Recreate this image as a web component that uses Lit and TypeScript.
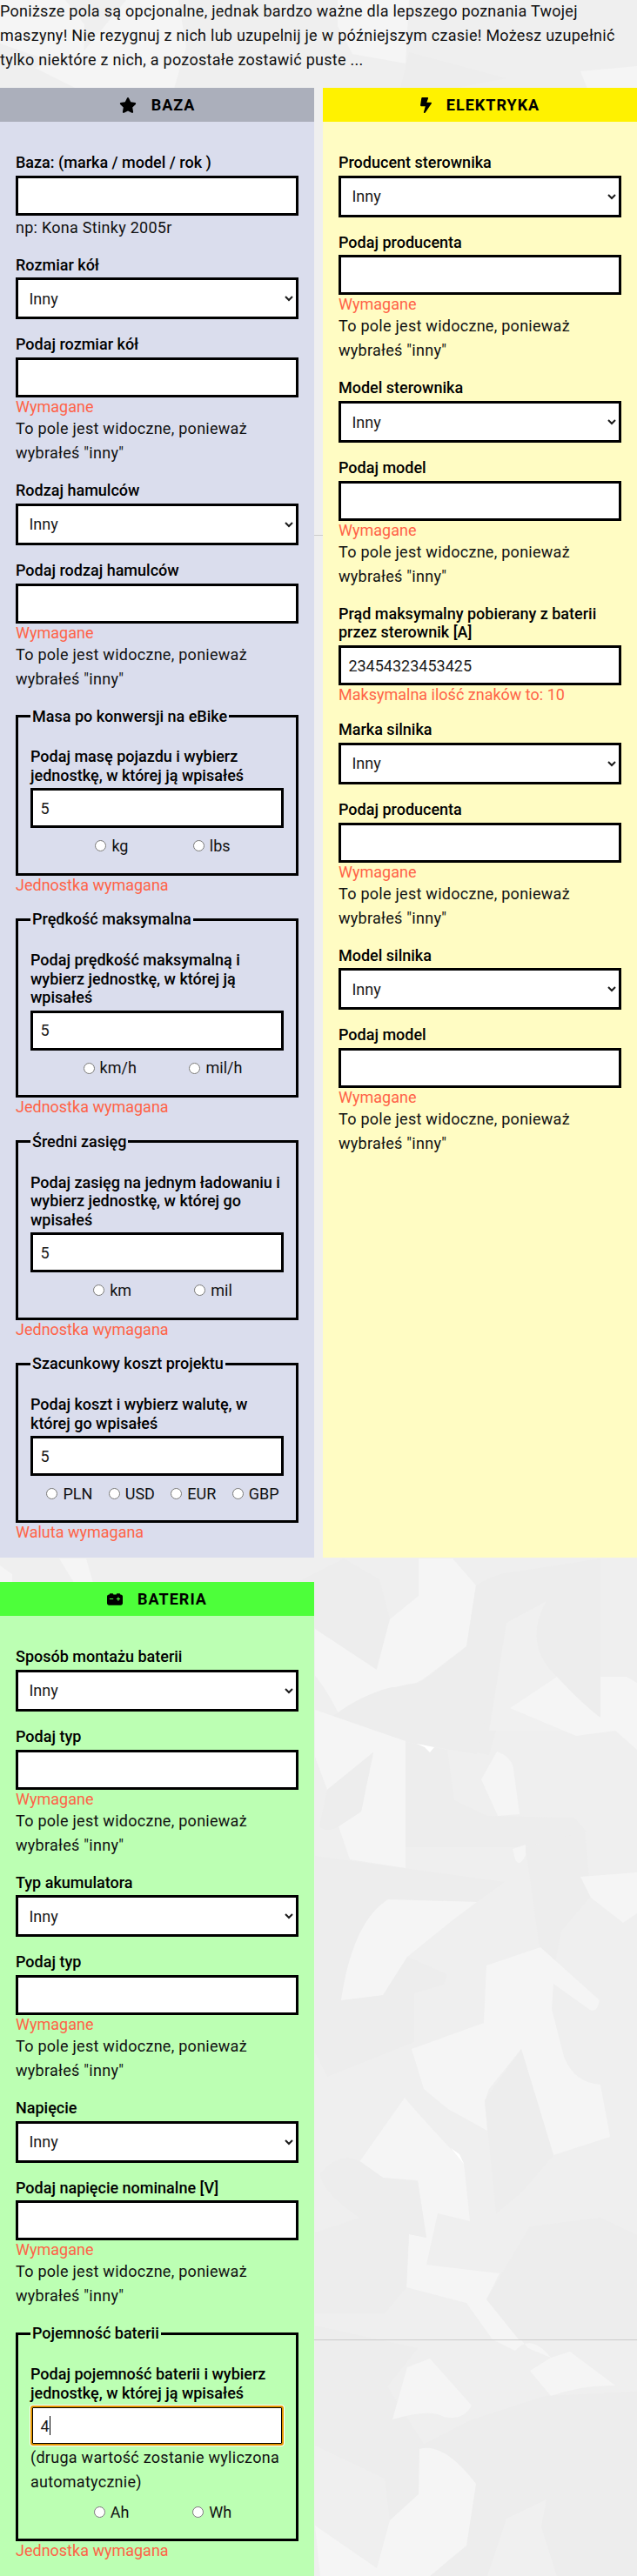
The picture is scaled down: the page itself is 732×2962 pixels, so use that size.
import { LitElement, html, css, svg, nothing } from 'lit';
import { customElement } from 'lit/decorators.js';

type Item =
  | { kind: 'select'; label: string }
  | { kind: 'input'; label: string; value?: string; hint?: string; error?: string; other?: boolean }
  | { kind: 'group'; legend: string; label: string; value: string; units: string[]; error: string; hint?: string; focused?: boolean };

const other = (label: string): Item => ({ kind: 'input', label, error: 'Wymagane', other: true });
const select = (label: string): Item => ({ kind: 'select', label });
const unitError = 'Jednostka wymagana';

const base: Item[] = [
  { kind: 'input', label: 'Baza: (marka / model / rok )', hint: 'np: Kona Stinky 2005r' },
  select('Rozmiar kół'),
  other('Podaj rozmiar kół'),
  select('Rodzaj hamulców'),
  other('Podaj rodzaj hamulców'),
  { kind: 'group', legend: 'Masa po konwersji na eBike', label: 'Podaj masę pojazdu i wybierz jednostkę, w której ją wpisałeś', value: '5', units: ['kg', 'lbs'], error: unitError },
  { kind: 'group', legend: 'Prędkość maksymalna', label: 'Podaj prędkość maksymalną i wybierz jednostkę, w której ją wpisałeś', value: '5', units: ['km/h', 'mil/h'], error: unitError },
  { kind: 'group', legend: 'Średni zasięg', label: 'Podaj zasięg na jednym ładowaniu i wybierz jednostkę, w której go wpisałeś', value: '5', units: ['km', 'mil'], error: unitError },
  { kind: 'group', legend: 'Szacunkowy koszt projektu', label: 'Podaj koszt i wybierz walutę, w której go wpisałeś', value: '5', units: ['PLN', 'USD', 'EUR', 'GBP'], error: 'Waluta wymagana' },
];
const electric: Item[] = [
  select('Producent sterownika'),
  other('Podaj producenta'),
  select('Model sterownika'),
  other('Podaj model'),
  { kind: 'input', label: 'Prąd maksymalny pobierany z baterii przez sterownik [A]', value: '23454323453425', error: 'Maksymalna ilość znaków to: 10' },
  select('Marka silnika'),
  other('Podaj producenta'),
  select('Model silnika'),
  other('Podaj model'),
];
const battery: Item[] = [
  select('Sposób montażu baterii'),
  other('Podaj typ'),
  select('Typ akumulatora'),
  other('Podaj typ'),
  select('Napięcie'),
  other('Podaj napięcie nominalne [V]'),
  { kind: 'group', legend: 'Pojemność baterii', label: 'Podaj pojemność baterii i wybierz jednostkę, w której ją wpisałeś', value: '4', units: ['Ah', 'Wh'], error: unitError, hint: '(druga wartość zostanie wyliczona automatycznie)', focused: true },
];

const star = html`<svg width="20" height="18" viewBox="0 0 576 512"><path d="M316.9 18C311.6 7 300.4 0 288.1 0s-23.4 7-28.800 18L195 150.300 51.400 171.500c-12 1.800-22 10.200-25.700 21.700s-.7 24.200 7.900 32.700L137.800 329 113.200 474.700c-2 12 3 24.200 12.900 31.300s23 8 33.800 2.300l128.300-68.500 128.300 68.500c10.800 5.700 23.900 4.900 33.800-2.300s14.900-19.300 12.900-31.300L438.500 329 542.700 225.900c8.600-8.500 11.700-21.200 7.900-32.700s-13.700-19.900-25.700-21.700L381.200 150.300 316.900 18z"/></svg>`;
const bolt = html`<svg width="13" height="18" viewBox="0 0 320 512" preserveAspectRatio="none"><path d="M296 160H180.600l42.600-129.800C227.200 15 215.700 0 200 0H56C44 0 33.800 8.900 32.200 20.800l-32 240C-1.700 275.200 9.500 288 24 288h118.700L96.600 482.500c-3.600 15.200 8 29.500 23.300 29.500 8.400 0 16.400-4.400 20.800-12l176-304c9.300-15.900-2.200-36-20.700-36z"/></svg>`;
const carBattery = html`<svg width="18" height="18" viewBox="0 0 512 512"><path d="M80 96c0-17.700 14.300-32 32-32h64c17.700 0 32 14.300 32 32h96c0-17.700 14.300-32 32-32h64c17.700 0 32 14.300 32 32h16c35.300 0 64 28.700 64 64v224c0 35.300-28.700 64-64 64H64c-35.300 0-64-28.700-64-64V160c0-35.300 28.700-64 64-64h16zm304 96c0-8.800-7.200-16-16-16s-16 7.200-16 16v32h-32c-8.800 0-16 7.200-16 16s7.200 16 16 16h32v32c0 8.800 7.200 16 16 16s16-7.200 16-16v-32h32c8.800 0 16-7.200 16-16s-7.200-16-16-16h-32v-32zM80 240c0 8.800 7.200 16 16 16h96c8.800 0 16-7.200 16-16s-7.200-16-16-16H96c-8.800 0-16 7.200-16 16z"/></svg>`;

/* Facets of the paper texture, in page coordinates. */
const facets: [string, string][] = [
  ['#f5f5f5', 'M0 0L75 0L97 28L96 84L0 50Z'],
  ['#f5f5f5', 'M145 0L205 0L214 54L200 102L88 102L40 78L95 60Z'],
  ['#f5f5f5', 'M388 0L470 0L466 73L405 62L388 30Z'],
  ['#f5f5f5', 'M667 82L732 76V102H675Z'],
  ['#ededed', 'M470 60L582 90L520 102H460Z'],
  ['#ededed', 'M395 1792L436 1816L448 1862L432 1920L362 1874L340 1820Z'],
  ['#f5f5f5', 'M68 1792H99L107 1820H85ZM0 1800L14 1810V1820H0Z'],
  ['#f5f5f5', 'M481 1792H520L547 1823L536 1893L494 1925Q480 1937 455 1943L392 1976Q374 1940 362 1927V1873L433 1920Q438 1900 448 1862L481 1835Z'],
  ['#ededed', 'M547 1823Q570 1808 600 1806L690 1792V1990H570L562 2018L374 1980Q430 1940 481 1935L496 1925L536 1893Z'],
  ['#f0f0f0', 'M562 1990L582 1866L628 1841Q600 1890 640 1928L690 1990Z'],
  ['#f5f5f5', 'M586 1964L640 1928Q670 1960 690 1975V1928H720L732 1935V2012L707 1990L662 1996Z'],
  ['#ededed', 'M374 1980Q410 1950 450 1940H566L548 2017L466 2003Z'],
  ['#f5f5f5', 'M362 1966L466 2002V2148L402 2138L389 2100L415 2083L429 2015L376 2058L362 2020Z'],
  ['#ededed', 'M429 2015L376 2058L367 2100Q376 2108 389 2100L415 2083Z'],
  ['#f5f5f5', 'M553 2046L571 2014Q588 2020 590 2034L597 2086L572 2088Z'],
  ['#ededed', 'M466 2003L514 2012L522 2070L560 2088L660 2090L674 2106L604 2124H466Z'],
  ['#ffffff', 'M479 2005L499 2009L494 2015L488 2009Z'],
  ['#f5f5f5', 'M589 2126L604 2121L604 2133Q597 2148 592 2138Z'],
  ['#ededed', 'M604 2124L672 2106L679 2180L645 2220L638 2256L620 2240Z'],
  ['#f5f5f5', 'M667 2158L732 2153V2200L716 2211L679 2182Z'],
  ['#ededed', 'M362 2134L580 2164L548 2187L446 2184L416 2225L392 2300L440 2294L466 2249L514 2270L510 2282L476 2292V2348L376 2388L362 2360Z'],
  ['#f5f5f5', 'M446 2184L548 2187L520 2208L468 2250L440 2294L392 2300Q405 2210 446 2184Z'],
  ['#f5f5f5', 'M621 2239L689 2300Q686 2315 678 2311L636 2281L634 2310L648 2365Q660 2395 690 2397L701 2457L636 2478L599 2356L562 2402L557 2416L560 2450L515 2425L487 2402L473 2356L556 2326L559 2260Z'],
  ['#ededed', 'M599 2356L636 2478L600 2520L570 2545L557 2415Z'],
  ['#f5f5f5', 'M465 2412Q475 2425 533 2487L540 2554L503 2545L490 2604L574 2614L559 2644L607 2700L633 2711L655 2704L707 2743Q670 2742 633 2755L609 2726L633 2711Q610 2682 592 2703L566 2690L536 2648L467 2630L470 2569L490 2573L480 2507L440 2504L413 2486Z'],
  ['#ffffff', 'M518 2470L528 2477L533 2488Z'],
  ['#ededed', 'M362 2567L413 2550Q370 2520 368 2500Q390 2472 415 2486L440 2504L480 2508L490 2573L470 2569L467 2630L442 2660H362Z'],
  ['#ededed', 'M609 2560L690 2550L732 2570V2690H596L559 2644Z'],
  ['#ededed', 'M362 2674L480 2700L445 2744L493 2820L481 2868L448 2898L442 2850L362 2812Z'],
  ['#ededed', 'M540 2783L626 2755L732 2750V2962H494L536 2927L547 2856L480 2814Z'],
  ['#f5f5f5', 'M494 2712L542 2766Q532 2784 510 2779Q495 2769 451 2782L468 2722Z'],
  ['#f5f5f5', 'M482 2816Q510 2808 547 2856L536 2927L494 2962H368L362 2904L433 2953L448 2898L481 2868Z'],
  ['#f0f0f0', 'M560 2962L582 2896L628 2874L622 2905L640 2962Z'],
];

@customElement('app-root')
export class AppRoot extends LitElement {
  static styles = css`
    :host { display: block; font-family: Roboto, sans-serif; font-size: 18px; font-weight: 400; color: #000; }
    * { box-sizing: border-box; }
    .page { position: relative; height: 2962px; overflow: hidden; background: #efefef; }
    .texture { position: absolute; inset: 0; width: 732px; height: 2962px; }
    .content { position: relative; }
    .intro { margin: -1px 0 0; height: 102px; line-height: 28px; letter-spacing: .27px; color: #111; }
    .columns { display: grid; grid-template-columns: 361px 361px; column-gap: 10px; row-gap: 27.75px; }
    .base { background: #dadded; }
    .electric { background: #fffcc3; }
    .battery { background: #bcffb3; }
    .title { display: flex; align-items: center; justify-content: center; gap: 17px; height: 39px; margin: 0; font-size: 18px; font-weight: 700; letter-spacing: 1px; }
    .base .title { background: #abafbb; }
    .electric .title { background: #fff200; }
    .battery .title { background: #4dff3a; }
    .title svg { display: block; }
    .body { padding: 36px 18px 0; }
    .label { display: block; font-weight: 500; line-height: 21.6px; margin-bottom: 4.15px; }
    .control { display: block; width: 100%; height: 46px; margin: 0; border: 3px solid #000; border-radius: 0; background: #fff; padding: 0 8.4px; font: inherit; color: #1a1a1a; outline: none; }
    .select { height: 48px; }
    .field { padding-bottom: 18px; }
    .hint { line-height: 28px; letter-spacing: .27px; color: #111; }
    .error { color: #ff6347; line-height: 21.95px; }
    .group { margin: 0; min-width: 0; border: 3px solid #000; padding: 24.95px 14px 20px; }
    .legend { padding: 0 2px; font-weight: 500; line-height: 21.6px; }
    .units { display: flex; justify-content: space-evenly; padding-top: 9.5px; color: #111; }
    .unit { display: flex; align-items: center; line-height: 21.6px; margin-left: 13px; }
    .radio { width: 13px; height: 13px; margin: 0 6px 0 0; }
    .entry { position: relative; }
    .focused { border: 2px solid #e59700; border-radius: 3px; padding: 0 9.4px; box-shadow: inset 0 0 0 1px #000, 0 0 0 1px #fff; }
    .caret { position: absolute; left: 22px; top: 12px; width: 1px; height: 22px; background: #000; }
  `;

  private field(i: Item) {
    if (i.kind === 'select')
      return html`<div class="field"><label class="label">${i.label}</label><select class="control select"><option>Inny</option></select></div>`;
    if (i.kind === 'input')
      return html`<div class="field"><label class="label">${i.label}</label><input class="control" .value=${i.value ?? ''} />
        ${i.error ? html`<div class="error">${i.error}</div>` : nothing}
        ${i.hint ? html`<div class="hint">${i.hint}</div>` : nothing}
        ${i.other ? html`<div class="hint">To pole jest widoczne, ponieważ wybrałeś "inny"</div>` : nothing}</div>`;
    return html`<div class="field"><fieldset class="group"><legend class="legend">${i.legend}</legend>
      <label class="label">${i.label}</label>
      <div class="entry"><input class="control ${i.focused ? 'focused' : ''}" .value=${i.value} />${i.focused ? html`<span class="caret"></span>` : nothing}</div>
      ${i.hint ? html`<div class="hint">${i.hint}</div>` : nothing}
      <div class="units">${i.units.map((u) => html`<label class="unit"><input class="radio" type="radio" name=${i.legend} />${u}</label>`)}</div>
    </fieldset><div class="error">${i.error}</div></div>`;
  }

  private panel(kind: string, title: string, icon: unknown, items: Item[]) {
    return html`<section class="panel ${kind}"><h2 class="title">${icon}<span>${title}</span></h2><div class="body">${items.map((i) => this.field(i))}</div></section>`;
  }

  render() {
    return html`<div class="page">
      <svg class="texture" viewBox="0 0 732 2962">${facets.map(([c, d]) => svg`<path fill=${c} d=${d} />`)}
        <path fill="#ccc" d="M0 615h732v1H0zM0 2690h732v1H0z" /></svg>
      <div class="content"><p class="intro">Poniższe pola są opcjonalne, jednak bardzo ważne dla lepszego poznania Twojej maszyny! Nie rezygnuj z nich lub uzupelnij je w późniejszym czasie! Możesz uzupełnić tylko niektóre z nich, a pozostałe zostawić puste ...</p>
      <div class="columns">${this.panel('base', 'BAZA', star, base)}${this.panel('electric', 'ELEKTRYKA', bolt, electric)}${this.panel('battery', 'BATERIA', carBattery, battery)}</div></div>
    </div>`;
  }
}
